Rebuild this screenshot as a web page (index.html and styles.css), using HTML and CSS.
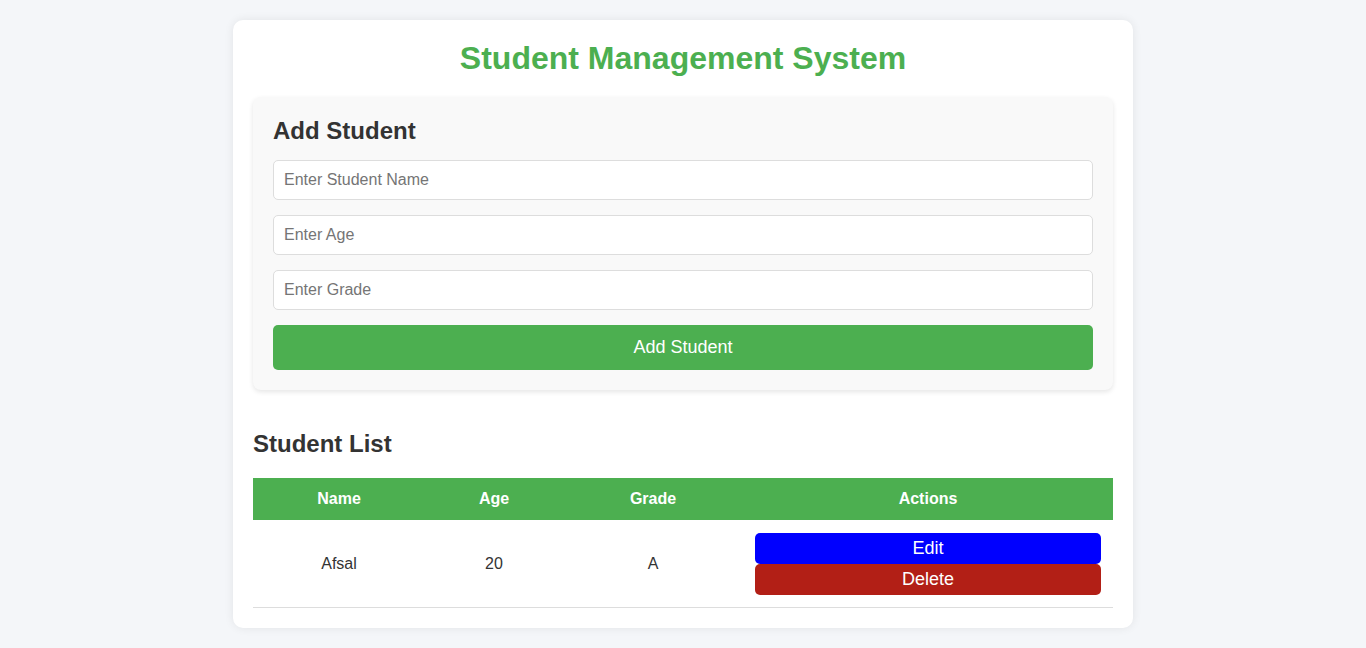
FILE: index.html
```html
<!DOCTYPE html>
<html lang="en">
<head>
<meta charset="utf-8">
<title>Student Management System</title>
<link rel="stylesheet" href="styles.css">
</head>
<body>
<div class="container">
  <h1 class="title">Student Management System</h1>
  <div class="form-card">
    <h2 class="form-title">Add Student</h2>
    <input class="field" type="text" placeholder="Enter Student Name">
    <input class="field" type="text" placeholder="Enter Age">
    <input class="field" type="text" placeholder="Enter Grade">
    <button class="add-btn">Add Student</button>
  </div>
  <h2 class="list-title">Student List</h2>
  <table class="students">
    <colgroup>
      <col class="c-name"><col class="c-age"><col class="c-grade"><col class="c-actions">
    </colgroup>
    <thead>
      <tr><th>Name</th><th>Age</th><th>Grade</th><th>Actions</th></tr>
    </thead>
    <tbody>
      <tr>
        <td>Afsal</td>
        <td>20</td>
        <td>A</td>
        <td class="actions">
          <button class="act edit">Edit</button>
          <button class="act delete">Delete</button>
        </td>
      </tr>
    </tbody>
  </table>
</div>
</body>
</html>
```
FILE: styles.css
```css
* { box-sizing: border-box; }
html, body { margin: 0; padding: 0; }
body {
  background: #f4f6f9;
  font-family: "Liberation Sans", Arial, sans-serif;
  color: #333;
  padding: 20px 0;
}
.container {
  width: 900px;
  margin: 0 auto;
  background: #fff;
  border-radius: 10px;
  padding: 20px;
  box-shadow: 0 0 10px rgba(0,0,0,0.08);
}
.title {
  margin: 0 0 20px;
  text-align: center;
  color: #4caf50;
  font-size: 32px;
  line-height: 37px;
}
.form-card {
  background: #f9f9f9;
  border-radius: 8px;
  padding: 20px;
  box-shadow: 0 2px 5px rgba(0,0,0,0.1);
  display: flex;
  flex-direction: column;
  gap: 15px;
}
.form-title {
  margin: 0;
  font-size: 24px;
  line-height: 28px;
}
.field {
  display: block;
  width: 100%;
  height: 40px;
  padding: 10px;
  border: 1px solid #ddd;
  border-radius: 5px;
  font-family: inherit;
  font-size: 16px;
  color: #333;
  background: #fff;
  outline: none;
}
.field::placeholder { color: #757575; }
.add-btn {
  height: 45px;
  border: none;
  border-radius: 5px;
  background: #4caf50;
  color: #fff;
  font-family: inherit;
  font-size: 18px;
}
.list-title {
  margin: 40px 0 20px;
  font-size: 24px;
  line-height: 28px;
}
.students {
  width: 100%;
  border-collapse: collapse;
  table-layout: fixed;
}
.c-name { width: 172px; }
.c-age { width: 138px; }
.c-grade { width: 180px; }
.c-actions { width: 370px; }
.students th {
  background: #4caf50;
  color: #fff;
  font-size: 16px;
  font-weight: bold;
  padding: 12px;
  line-height: 18px;
  text-align: center;
}
.students td {
  padding: 12px;
  text-align: center;
  font-size: 16px;
  line-height: 18px;
  border-bottom: 1px solid #ddd;
}
.students td.actions { padding-top: 13px; }
.act {
  display: block;
  width: 100%;
  height: 31px;
  border: none;
  border-radius: 5px;
  color: #fff;
  font-family: inherit;
  font-size: 18px;
  padding: 0;
}
.edit { background: #0000ff; }
.delete { background: #b21f16; }
```
